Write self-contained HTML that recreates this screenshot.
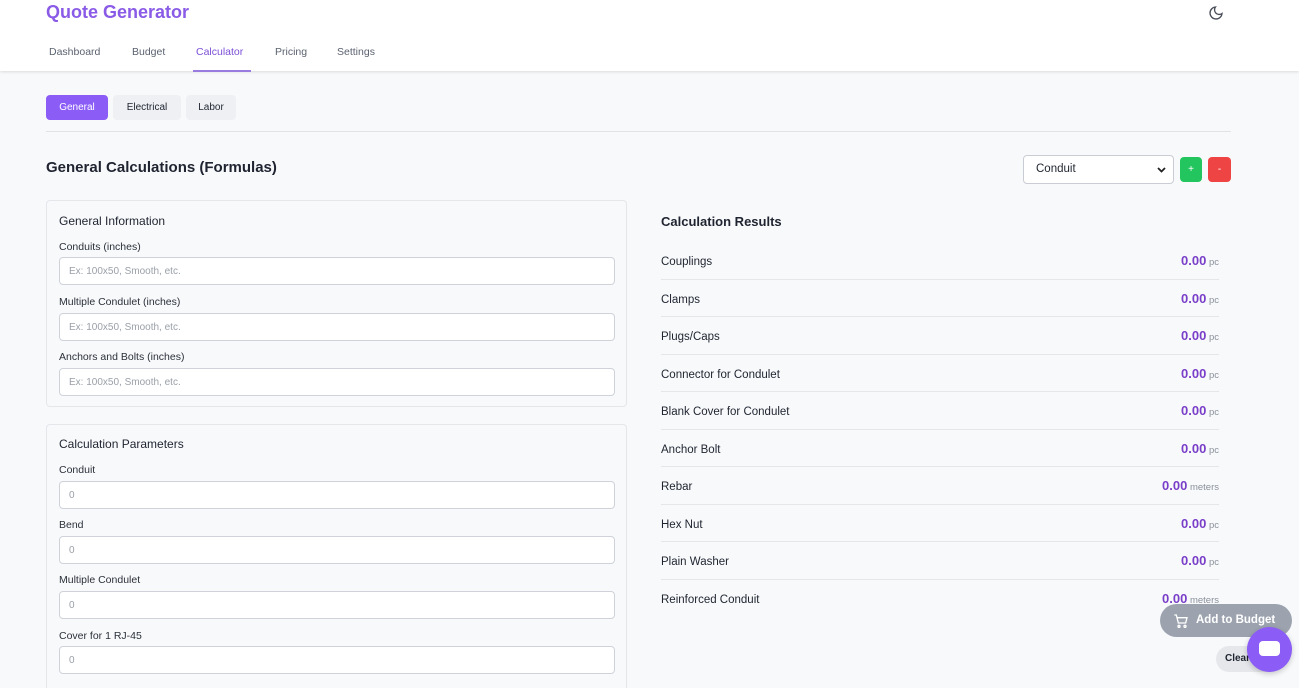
<!DOCTYPE html><html><head><style>
*{box-sizing:border-box;margin:0;padding:0}
html,body{width:1299px;height:688px;overflow:hidden}
body{background:#f8f9fb;font-family:"Liberation Sans",sans-serif;color:#1f2430;position:relative}
.a{position:absolute}
.hdr{left:0;top:0;width:1299px;height:71px;background:#fff;box-shadow:0 1px 3px rgba(0,0,0,.12)}
.nav{font-size:10.5px;color:#5b6270;top:46px}
.card{background:#f8f9fb;border:1px solid #e4e6ea;border-radius:4px;left:46px;width:581px}
.lbl{font-size:10.5px;color:#2b303a;left:59px}
.inp{left:59px;width:556px;height:28px;background:#fff;border:1px solid #cfd3d9;border-radius:4px;font-size:10px;color:#9aa0a8;padding:8px 0 0 9px}
.row{left:661px;width:558px;height:37.5px;border-bottom:1px solid #e4e6ea;font-size:11.5px;display:flex;justify-content:space-between;align-items:baseline;padding-top:11px}
.row span.r{font-size:9.5px;color:#8a909a}
.row b{color:#7a3fc9;font-size:13px}
</style></head><body>
<div class="a hdr"></div>
<div class="a" style="left:46px;top:2px;font-size:18px;font-weight:bold;color:#8a5be6">Quote Generator</div>
<svg class="a" style="left:1208px;top:5px" width="16" height="16" viewBox="0 0 24 24" fill="none" stroke="#4a4f59" stroke-width="2"><path d="M21 12.8A9 9 0 1 1 11.2 3a7 7 0 0 0 9.8 9.8z"/></svg>
<div class="a nav" style="left:49px">Dashboard</div>
<div class="a nav" style="left:132px">Budget</div>
<div class="a nav" style="left:196px;color:#7b4fd6">Calculator</div>
<div class="a nav" style="left:275px">Pricing</div>
<div class="a nav" style="left:337px">Settings</div>
<div class="a" style="left:193px;top:70px;width:58px;height:1.5px;background:#9a7be0"></div>
<div class="a" style="left:46px;top:95px;width:62px;height:25px;background:#8b5cf6;border-radius:4px;color:#fff;font-size:10px;text-align:center;line-height:25px">General</div>
<div class="a" style="left:113px;top:95px;width:68px;height:25px;background:#eef0f3;border-radius:4px;font-size:10px;text-align:center;line-height:25px">Electrical</div>
<div class="a" style="left:186px;top:95px;width:50px;height:25px;background:#eef0f3;border-radius:4px;font-size:10px;text-align:center;line-height:25px">Labor</div>
<div class="a" style="left:46px;top:131px;width:1185px;height:1px;background:#e1e3e7"></div>
<div class="a" style="left:46px;top:159px;font-size:15px;font-weight:bold">General Calculations (Formulas)</div>
<div class="a" style="left:1023px;top:155px;width:151px;height:29px;background:#fff;border:1px solid #c9cdd3;border-radius:4px;font-size:11.5px;padding:7px 0 0 12px">Conduit<svg style="position:absolute;right:7px;top:11px" width="9" height="6" viewBox="0 0 9 6"><path d="M1 1l3.5 3.5L8 1" fill="none" stroke="#222" stroke-width="1.8"/></svg></div>
<div class="a" style="left:1180px;top:157px;width:22px;height:25px;background:#22c55e;border-radius:4px;color:#fff;font-size:10px;text-align:center;line-height:25px">+</div>
<div class="a" style="left:1208px;top:157px;width:23px;height:25px;background:#ef4444;border-radius:4px;color:#fff;font-size:10px;text-align:center;line-height:25px">-</div>
<div class="a card" style="top:200px;height:207px"></div>
<div class="a" style="left:59px;top:214px;font-size:12px">General Information</div>
<div class="a lbl" style="top:241px">Conduits (inches)</div>
<div class="a inp" style="top:257px">Ex: 100x50, Smooth, etc.</div>
<div class="a lbl" style="top:296px">Multiple Condulet (inches)</div>
<div class="a inp" style="top:313px">Ex: 100x50, Smooth, etc.</div>
<div class="a lbl" style="top:351px">Anchors and Bolts (inches)</div>
<div class="a inp" style="top:368px">Ex: 100x50, Smooth, etc.</div>
<div class="a card" style="top:424px;height:270px"></div>
<div class="a" style="left:59px;top:437px;font-size:12px">Calculation Parameters</div>
<div class="a lbl" style="top:464px">Conduit</div>
<div class="a inp" style="top:481px">0</div>
<div class="a lbl" style="top:519px">Bend</div>
<div class="a inp" style="top:536px">0</div>
<div class="a lbl" style="top:574px">Multiple Condulet</div>
<div class="a inp" style="top:591px">0</div>
<div class="a lbl" style="top:630px">Cover for 1 RJ-45</div>
<div class="a inp" style="top:646px">0</div>
<div class="a" style="left:661px;top:214px;font-size:13px;font-weight:bold">Calculation Results</div>
<div class="a row" style="top:242px"><span>Couplings</span><span class="r"><b>0.00</b> pc</span></div>
<div class="a row" style="top:279.5px"><span>Clamps</span><span class="r"><b>0.00</b> pc</span></div>
<div class="a row" style="top:317px"><span>Plugs/Caps</span><span class="r"><b>0.00</b> pc</span></div>
<div class="a row" style="top:354.5px"><span>Connector for Condulet</span><span class="r"><b>0.00</b> pc</span></div>
<div class="a row" style="top:392px"><span>Blank Cover for Condulet</span><span class="r"><b>0.00</b> pc</span></div>
<div class="a row" style="top:429.5px"><span>Anchor Bolt</span><span class="r"><b>0.00</b> pc</span></div>
<div class="a row" style="top:467px"><span>Rebar</span><span class="r"><b>0.00</b> meters</span></div>
<div class="a row" style="top:504.5px"><span>Hex Nut</span><span class="r"><b>0.00</b> pc</span></div>
<div class="a row" style="top:542px"><span>Plain Washer</span><span class="r"><b>0.00</b> pc</span></div>
<div class="a row" style="top:579.5px;border:none"><span>Reinforced Conduit</span><span class="r"><b>0.00</b> meters</span></div>
<div class="a" style="left:1160px;top:604px;width:132px;height:33px;background:#9ca3af;border-radius:17px;color:#fff;font-size:11.5px;font-weight:bold;line-height:33px;padding-left:36px">Add to Budget</div>
<svg class="a" style="left:1173px;top:613px" width="16" height="16" viewBox="0 0 24 24" fill="none" stroke="#fff" stroke-width="2"><path d="M2 3h3l3 12h11l2-8H6"/><circle cx="9" cy="20" r="1.5"/><circle cx="18" cy="20" r="1.5"/></svg>
<div class="a" style="left:1216px;top:646px;width:60px;height:26px;background:#e5e7eb;border-radius:13px;font-size:10px;font-weight:bold;line-height:26px;padding-left:9px">Clear</div>
<div class="a" style="left:1247px;top:627px;width:45px;height:45px;background:#8b5cf6;border-radius:50%;box-shadow:0 2px 6px rgba(0,0,0,.2)"></div>
<div class="a" style="left:1259px;top:641px;width:21px;height:15px;background:#fff;border-radius:4px"></div>
</body></html>
